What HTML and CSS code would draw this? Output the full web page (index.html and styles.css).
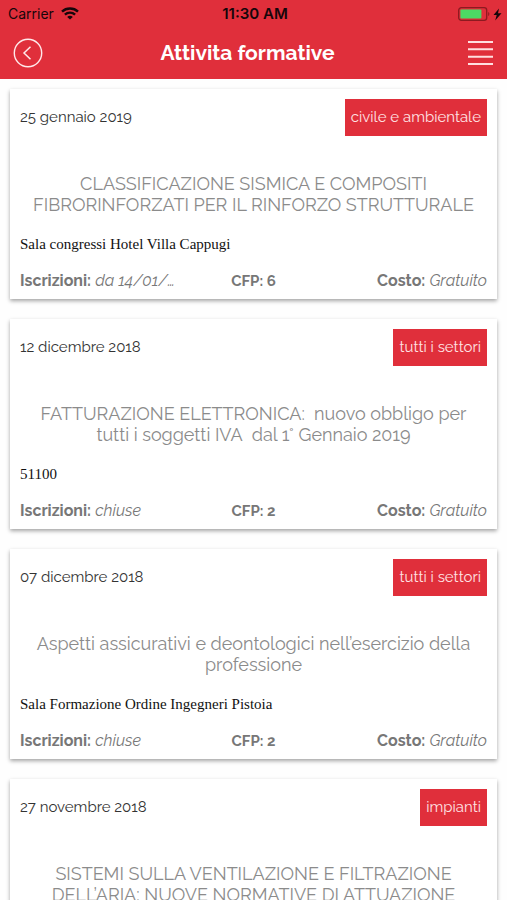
FILE: index.html
```html
<!DOCTYPE html>
<html lang="it">
<head>
<meta charset="utf-8">
<meta name="viewport" content="width=device-width, initial-scale=1">
<title>Attivita formative</title>
<link rel="stylesheet" href="styles.css">
</head>
<body>
<div class="app">
  <header class="top">
    <div class="status">
      <div class="carrier">
        <span>Carrier</span>
        <svg width="18" height="13" viewBox="0 0 18 13" fill="none" stroke="#16060a" stroke-width="2.4" aria-hidden="true">
          <path d="M1 4.6C5.4 .4 12.6 .4 17 4.6"/>
          <path d="M3.9 7.6c2.9-2.7 7.3-2.7 10.2 0"/>
          <path d="M9 12.6 6.2 9.9c1.6-1.4 4-1.4 5.6 0z" fill="#16060a" stroke="none"/>
        </svg>
      </div>
      <span class="clock">11:30 AM</span>
      <svg class="battery" width="44" height="14" viewBox="0 0 44 14" aria-hidden="true">
        <rect x=".7" y=".7" width="28" height="12.6" rx="2.6" fill="none" stroke="#8c1a20" stroke-width="1.3"/>
        <rect x="2.4" y="2.4" width="21" height="9.2" rx="1" fill="#4cd964"/>
        <path d="M30.2 5v4c1.6-.6 1.6-3.4 0-4z" fill="#8c1a20"/>
        <path d="M41 1.500 35.500 8h3.200l-1.500 5.500L43.500 6.200h-3.500z" fill="#16060a"/>
      </svg>
    </div>
    <nav class="bar">
      <button class="icon" type="button" aria-label="Indietro">
        <svg width="30" height="30" viewBox="0 0 30 30" fill="none" stroke="#ffe9ea">
          <circle cx="15" cy="15" r="13.7" stroke-width="1.4"/>
          <path d="M17.5 8.700 11 15l6.500 6.300" stroke-width="1.5"/>
        </svg>
      </button>
      <h1>Attivita formative</h1>
      <button class="icon" type="button" aria-label="Menu">
        <svg width="26" height="30" viewBox="0 0 26 30" stroke="#ffdfe0" stroke-width="2">
          <path d="M0 4H25M0 11.300H25M0 18.700H25M0 26H25"/>
        </svg>
      </button>
    </nav>
  </header>
  <main class="list">
    <article class="card">
      <div class="head"><time datetime="2019-01-25">25 gennaio 2019</time><span class="tag">civile e ambientale</span></div>
      <h2>CLASSIFICAZIONE SISMICA E COMPOSITI FIBRORINFORZATI PER IL RINFORZO STRUTTURALE</h2>
      <p class="venue">Sala congressi Hotel Villa Cappugi</p>
      <div class="facts"><span><b>Iscrizioni:</b> <i>da 14/01/…</i></span><b class="credits">CFP: 6</b><span><b>Costo:</b> <i>Gratuito</i></span></div>
    </article>
    <article class="card">
      <div class="head"><time datetime="2018-12-12">12 dicembre 2018</time><span class="tag">tutti i settori</span></div>
      <h2>FATTURAZIONE ELETTRONICA:&nbsp; nuovo obbligo per tutti i soggetti IVA&nbsp; dal 1° Gennaio 2019</h2>
      <p class="venue">51100</p>
      <div class="facts"><span><b>Iscrizioni:</b> <i>chiuse</i></span><b class="credits">CFP: 2</b><span><b>Costo:</b> <i>Gratuito</i></span></div>
    </article>
    <article class="card">
      <div class="head"><time datetime="2018-12-07">07 dicembre 2018</time><span class="tag">tutti i settori</span></div>
      <h2>Aspetti assicurativi e deontologici nell’esercizio della professione</h2>
      <p class="venue">Sala Formazione Ordine Ingegneri Pistoia</p>
      <div class="facts"><span><b>Iscrizioni:</b> <i>chiuse</i></span><b class="credits">CFP: 2</b><span><b>Costo:</b> <i>Gratuito</i></span></div>
    </article>
    <article class="card">
      <div class="head"><time datetime="2018-11-27">27 novembre 2018</time><span class="tag">impianti</span></div>
      <h2>SISTEMI SULLA VENTILAZIONE E FILTRAZIONE DELL’ARIA: NUOVE NORMATIVE DI ATTUAZIONE</h2>
    </article>
  </main>
</div>
</body>
</html>
```
FILE: styles.css
```css
* { box-sizing: border-box; }
body, h1, h2, p { margin: 0; }
body {
  background: #fefefe;
  color: #333;
  font-family: Raleway, Lato, "Open Sans", sans-serif;
  font-size: 15px;
  line-height: 18px;
}
.app { display: flex; flex-direction: column; height: 100vh; }
.top { flex: none; background: #e02f3b; padding-bottom: 10px; }
.status {
  display: grid;
  grid-template-columns: 1fr auto 1fr;
  align-items: center;
  height: 27px;
  padding: 0 5px 0 8px;
  color: #16060a;
  font-family: Inter, Roboto, sans-serif;
  font-size: 14px;
}
.carrier { display: flex; align-items: center; gap: 7px; }
.clock { font-size: 15px; font-weight: 600; }
.battery { justify-self: end; }
.bar {
  display: grid;
  grid-template-columns: 30px 1fr 42px;
  align-items: center;
  height: 42px;
  padding: 10px 13px 0;
  align-content: center;
}
.bar h1 {
  color: #fff;
  font-size: 21px;
  line-height: 26px;
  font-weight: 700;
  text-align: center;
}
.icon { display: flex; padding: 0; border: 0; background: none; cursor: pointer; }
.icon:last-child { justify-self: end; }
.list {
  flex: 1;
  display: flex;
  flex-direction: column;
  gap: 20px;
  padding: 10px;
  overflow: auto;
  scrollbar-width: none;
}
.card {
  flex: none;
  padding: 10px 10px 9px;
  background: #fff;
  box-shadow: 0 2px 4px rgba(0, 0, 0, .36);
}
.head { display: flex; justify-content: space-between; align-items: baseline; }
.tag { padding: 9px 6px 10px; background: #e02f3b; color: #ffe3e4; }
.card h2 {
  margin: 37px 0 20px;
  padding: 0 8px;
  color: #8b8b8b;
  font-size: 18px;
  line-height: 21px;
  font-weight: 400;
  text-align: center;
}
.venue {
  margin-bottom: 19px;
  color: #111;
  font-family: "Liberation Serif", "Times New Roman", serif;
}
.facts {
  display: grid;
  grid-template-columns: 1fr auto 1fr;
  color: #777;
  font-size: 16px;
}
.facts > :last-child { text-align: right; }
.credits { font-size: 15px; }
```
